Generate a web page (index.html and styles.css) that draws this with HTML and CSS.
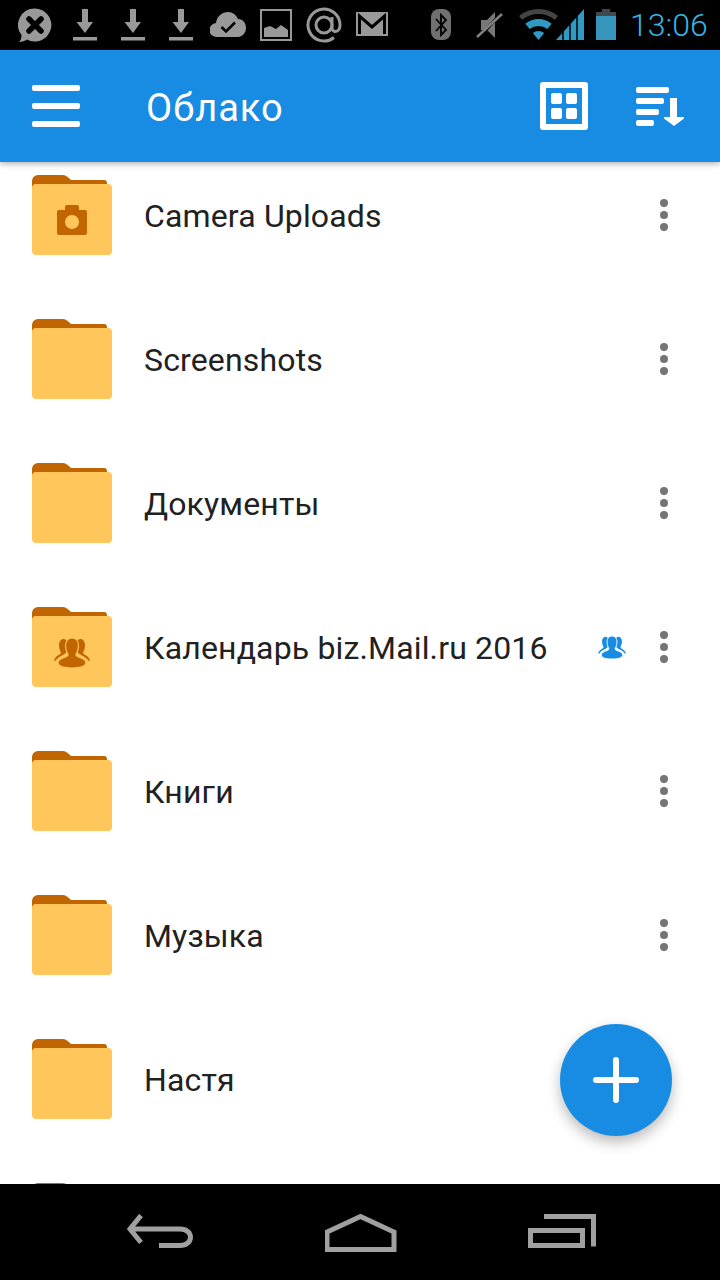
FILE: index.html
```html
<!DOCTYPE html>
<html lang="ru">
<head>
  <meta charset="UTF-8" />
  <meta name="viewport" content="width=device-width, initial-scale=1" />
  <title>Облако</title>
  <link rel="stylesheet" href="styles.css">
</head>
<body>
  <!-- общие символы -->
  <svg class="defs" width="0" height="0">
    <symbol id="download" viewBox="0 0 24 50">
      <path d="M9.500 9h6v13h5L12.500 33 4 22h5.500z"/>
      <rect x="0.500" y="37" width="24" height="3.500"/>
    </symbol>
    <symbol id="folder" viewBox="0 0 80 80">
      <path class="folder-back" d="M0 6a6 6 0 0 1 6-6h24c4 0 6 2 9 5h33c2 0 3 1 3 3v12H0z"/>
      <rect class="folder-front" y="9" width="80" height="71" rx="4"/>
    </symbol>
    <symbol id="more" viewBox="0 0 8 32">
      <circle cx="4" cy="4" r="4"/>
      <circle cx="4" cy="16" r="4"/>
      <circle cx="4" cy="28" r="4"/>
    </symbol>
    <symbol id="group" viewBox="0 0 36 30">
      <path d="M9 1c3 0 5 2 5 6 0 3-1 6-2 8-2 2-6 3-8 5l-3 3c-1 0-1-1-1-1l2-3c2-2 5-3 5-4-1-2-2-5-2-8s2-6 4-6z"/>
      <path d="M27 1c-3 0-5 2-5 6 0 3 1 6 2 8 2 2 6 3 8 5l3 3c1 0 1-1 1-1l-2-3c-2-2-5-3-5-4 1-2 2-5 2-8s-2-6-4-6z"/>
      <path class="group-main" d="M18 0c3.800 0 6.500 3 6.500 8 0 4-2 7-2.500 9 0 2 8 3 9.500 6 1.500 3.500-1 7-13.500 7S3 26.500 4.500 23c1.500-3 9.500-4 9.500-6-.5-2-2.500-5-2.500-9 0-5 2.700-8 6.500-8z"/>
    </symbol>
  </svg>

  <div class="status-bar">
    <svg class="st" width="36" height="50" viewBox="0 0 36 50">
      <path d="M17 8.500a16.500 16.500 0 1 1-8 31c-2 1.500-5 2.500-8 2.500 2-2 2.500-4 2.500-7A16.500 16.500 0 0 1 17 8.500z"/>
      <path class="st-cut" d="M11 19l12 12M23 19L11 31"/>
    </svg>
    <svg class="st st-dl st-dl-first"><use href="#download"/></svg>
    <svg class="st st-dl"><use href="#download"/></svg>
    <svg class="st st-dl"><use href="#download"/></svg>
    <svg class="st st-cloud" width="36" height="50" viewBox="0 0 36 50">
      <path d="M7 37a7 7 0 0 1-1-14c1-7 6-11 12-11 5 0 8 3 10 7 5 0 8 4 8 9 0 5-4 9-8 9z"/>
      <path class="st-check" d="M11.500 27l4.500 4.500 9-9"/>
    </svg>
    <svg class="st st-pic" width="32" height="50" viewBox="0 0 32 50">
      <rect class="st-line" x="1" y="10" width="30" height="30"/>
      <path d="M4 37v-9l6-2 6 3 5-4 7 5v7z"/>
    </svg>
    <svg class="st st-at" width="36" height="50" viewBox="0 0 36 50">
      <circle class="st-line3" cx="18" cy="25" r="8"/>
      <path class="st-line3" d="M26 17v11c0 5 8 5 8-3a16 16 0 1 0-6 12.500"/>
    </svg>
    <svg class="st st-mail" width="32" height="50" viewBox="0 0 32 50">
      <rect y="12" width="32" height="24"/>
      <path class="st-m" d="M3.500 34V16l12.500 11 12.500-11v18"/>
    </svg>

    <svg class="st st-bt" width="20" height="50" viewBox="0 0 20 50">
      <rect y="9" width="20" height="31" rx="8"/>
      <path class="st-rune" d="M5 19l10 11-5 5V15l5 5-10 11"/>
    </svg>
    <svg class="st st-mute" width="28" height="50" viewBox="0 0 28 50">
      <path d="M5 20h6l8-8v26l-8-8H5z"/>
      <path class="st-slash-cut" d="M1 40L27 11"/>
      <path class="st-slash" d="M1 37L26 14"/>
    </svg>
    <svg class="st st-wifi" width="39" height="50" viewBox="0 0 39 50">
      <path class="wifi-off" d="M0 15.900A31 31 0 0 1 39 15.900L35.900 19.800A26 26 0 0 0 3.100 19.800Z"/>
      <path d="M6.300 23.700A21 21 0 0 1 32.700 23.700L28.300 29.100A14 14 0 0 0 10.700 29.100Z"/>
      <path d="M13.800 33A9 9 0 0 1 25.200 33L19.500 40Z"/>
    </svg>
    <svg class="st st-signal" width="28" height="50" viewBox="0 0 28 50">
      <path d="M0 40L28 9v31z"/>
      <path class="signal-gap" d="M7 9v31M14 9v31M21 9v31"/>
    </svg>
    <svg class="st st-batt" width="20" height="50" viewBox="0 0 20 50">
      <path class="batt-top" d="M6 9h8v3h6v4H0v-4h6z"/>
      <rect y="16" width="20" height="24"/>
    </svg>
    <span class="time">13:06</span>
  </div>

  <header class="app-bar">
    <div class="burger"><span></span><span></span><span></span></div>
    <h1 class="title">Облако</h1>
    <div class="bar-actions">
      <svg class="bar-icon" width="48" height="48" viewBox="0 0 48 48">
        <path fill-rule="evenodd" d="M3 0h42a3 3 0 0 1 3 3v42a3 3 0 0 1-3 3H3a3 3 0 0 1-3-3V3a3 3 0 0 1 3-3zm3 6v36h36V6z"/>
        <rect x="11" y="11" width="11" height="11" rx="2"/>
        <rect x="26" y="11" width="11" height="11" rx="2"/>
        <rect x="11" y="26" width="11" height="11" rx="2"/>
        <rect x="26" y="26" width="11" height="11" rx="2"/>
      </svg>
      <svg class="bar-icon" width="48" height="48" viewBox="0 -5 48 48">
        <rect y="0" width="33" height="6" rx="2"/>
        <rect y="11" width="28" height="6" rx="2"/>
        <rect y="22" width="23" height="6" rx="2"/>
        <rect y="33" width="18" height="6" rx="2"/>
        <path d="M34 11h7v19h6a1 1 0 0 1 1 1.500L38 39 28 31.500a1 1 0 0 1 1-1.500h5z"/>
      </svg>
    </div>
  </header>

  <main class="content">
    <ul class="list">
      <li class="row">
        <span class="folder">
          <svg width="80" height="80"><use href="#folder"/></svg>
          <svg class="folder-mark camera" width="30" height="30" viewBox="0 0 30 30">
            <path d="M8 5V2a2 2 0 0 1 2-2h10a2 2 0 0 1 2 2v3h6a2 2 0 0 1 2 2v21a2 2 0 0 1-2 2H2a2 2 0 0 1-2-2V7a2 2 0 0 1 2-2z"/>
            <circle class="camera-lens" cx="15" cy="17" r="7"/>
          </svg>
        </span>
        <span class="name">Camera Uploads</span>
        <svg class="more" width="8" height="32"><use href="#more"/></svg>
      </li>
      <li class="row">
        <span class="folder"><svg width="80" height="80"><use href="#folder"/></svg></span>
        <span class="name">Screenshots</span>
        <svg class="more" width="8" height="32"><use href="#more"/></svg>
      </li>
      <li class="row">
        <span class="folder"><svg width="80" height="80"><use href="#folder"/></svg></span>
        <span class="name">Документы</span>
        <svg class="more" width="8" height="32"><use href="#more"/></svg>
      </li>
      <li class="row">
        <span class="folder">
          <svg width="80" height="80"><use href="#folder"/></svg>
          <svg class="folder-mark people" width="36" height="30"><use href="#group"/></svg>
        </span>
        <span class="name">Календарь biz.Mail.ru 2016</span>
        <svg class="shared" width="28" height="23"><use href="#group"/></svg>
        <svg class="more" width="8" height="32"><use href="#more"/></svg>
      </li>
      <li class="row">
        <span class="folder"><svg width="80" height="80"><use href="#folder"/></svg></span>
        <span class="name">Книги</span>
        <svg class="more" width="8" height="32"><use href="#more"/></svg>
      </li>
      <li class="row">
        <span class="folder"><svg width="80" height="80"><use href="#folder"/></svg></span>
        <span class="name">Музыка</span>
        <svg class="more" width="8" height="32"><use href="#more"/></svg>
      </li>
      <li class="row">
        <span class="folder"><svg width="80" height="80"><use href="#folder"/></svg></span>
        <span class="name">Настя</span>
      </li>
      <li class="row">
        <span class="folder"><svg width="80" height="80"><use href="#folder"/></svg></span>
      </li>
    </ul>
    <button class="fab" aria-label="Добавить">
      <svg width="46" height="46" viewBox="0 0 46 46"><path d="M23 3v40M3 23h40"/></svg>
    </button>
  </main>

  <nav class="nav-bar">
    <svg class="nav-icon" width="66" height="34" viewBox="0 0 66 34">
      <path d="M14 1.500L3 15l11 13.500M3 15h50c14 0 14 16.500 0 16.500H32"/>
    </svg>
    <svg class="nav-icon" width="72" height="38" viewBox="0.500 0 72 38">
      <path d="M36 2.500L2.500 18v17.500h67V18z"/>
    </svg>
    <svg class="nav-icon" width="68" height="34" viewBox="0 0 68 34">
      <path d="M2.500 16.500h52v15h-52zM16 2.500h49.500v30" class="recent"/>
    </svg>
  </nav>
</body>
</html>
```

FILE: styles.css
```css
* {
  box-sizing: border-box;
}

html, body {
  margin: 0;
  padding: 0;
  height: 100%;
}

body {
  display: flex;
  flex-direction: column;
  height: 1280px;
  font-family: Roboto, "Noto Sans", sans-serif;
  background: #ffffff;
  overflow: hidden;
}

.defs {
  position: absolute;
}

/* Статус-бар */
.status-bar {
  display: flex;
  align-items: center;
  flex: none;
  height: 50px;
  padding-left: 18px;
  background: #000000;
}

.st {
  display: block;
  flex: none;
  width: auto;
  height: 50px;
  fill: #999999;
}

.st-cut {
  fill: none;
  stroke: #000000;
  stroke-width: 5.5;
  stroke-linecap: round;
}

.st-dl {
  width: 25px;
  margin-left: 23px;
}

.st-dl-first {
  margin-left: 18px;
}

.st-cloud {
  margin-left: 17px;
}

.st-check {
  fill: none;
  stroke: #000000;
  stroke-width: 2.5;
}

.st-pic {
  margin-left: 14px;
}

.st-line {
  fill: none;
  stroke: #999999;
  stroke-width: 2;
}

.st-at {
  margin-left: 14px;
}

.st-line3 {
  fill: none;
  stroke: #999999;
  stroke-width: 3;
}

.st-mail {
  margin-left: 14px;
}

.st-m {
  fill: none;
  stroke: #000000;
  stroke-width: 3;
}

.st-bt {
  margin-left: 43px;
  fill: #707070;
}

.st-rune {
  fill: none;
  stroke: #000000;
  stroke-width: 1.800;
}

.st-mute {
  margin-left: 25px;
  fill: #777777;
}

.st-slash-cut {
  fill: none;
  stroke: #000000;
  stroke-width: 3;
}

.st-slash {
  fill: none;
  stroke: #808080;
  stroke-width: 2.500;
}

.st-wifi {
  margin-left: 15px;
  fill: #2f9ac4;
}

.wifi-off {
  fill: #444444;
}

.st-signal {
  margin-left: -2px;
  fill: #2f9ac4;
}

.signal-gap {
  fill: none;
  stroke: #000000;
  stroke-width: 1.500;
}

.st-batt {
  margin-left: 12px;
  fill: #3595bc;
}

.batt-top {
  fill: #3f4a4f;
}

.time {
  margin-left: 14px;
  font-size: 32px;
  font-weight: 300;
  color: #33b5e5;
}

/* Верхняя панель */
.app-bar {
  position: relative;
  z-index: 2;
  display: flex;
  align-items: center;
  flex: none;
  height: 112px;
  padding: 0 36px 0 32px;
  background: #188ce2;
  box-shadow: 0 2px 6px rgba(0, 0, 0, 0.3);
}

.burger {
  display: flex;
  flex-direction: column;
  gap: 12px;
  width: 48px;
}

.burger span {
  display: block;
  height: 6px;
  border-radius: 2px;
  background: #ffffff;
}

.title {
  flex: 1;
  margin: 3px 0 0 66px;
  font-size: 38px;
  font-weight: 400;
  letter-spacing: 1px;
  color: #ffffff;
}

.bar-actions {
  display: flex;
  gap: 48px;
}

.bar-icon {
  fill: #ffffff;
}

/* Список папок */
.content {
  position: relative;
  flex: 1;
  min-height: 0;
  overflow: hidden;
}

.list {
  margin: -19px 0 0;
  padding: 0;
  list-style: none;
}

.row {
  display: flex;
  align-items: center;
  height: 144px;
  padding: 0 52px 0 32px;
}

.folder {
  position: relative;
  flex: none;
  width: 80px;
  height: 80px;
  margin-right: 32px;
}

.folder svg {
  display: block;
}

.folder-back {
  fill: #c06500;
}

.folder-front {
  fill: #ffc65c;
}

.folder-mark {
  position: absolute;
  left: 25px;
  top: 30px;
  fill: #c06500;
}

.people {
  left: 22px;
  top: 31px;
  --group-gap: #ffc65c;
}

.camera-lens {
  fill: #ffc65c;
}

.group-main {
  stroke: var(--group-gap, #ffffff);
  stroke-width: 1.2;
}

.name {
  flex: 1;
  margin-top: 1px;
  font-size: 32px;
  letter-spacing: 0.15px;
  color: #212121;
  white-space: nowrap;
}

.shared {
  flex: none;
  margin-right: 34px;
  fill: #188ce2;
}

.more {
  flex: none;
  fill: #757575;
}

.fab {
  position: absolute;
  left: 560px;
  top: 862px;
  display: flex;
  align-items: center;
  justify-content: center;
  width: 112px;
  height: 112px;
  padding: 0;
  border: none;
  border-radius: 50%;
  background: #188ce2;
  box-shadow: 0 6px 14px rgba(0, 0, 0, 0.28);
}

.fab path {
  fill: none;
  stroke: #ffffff;
  stroke-width: 6;
  stroke-linecap: round;
}

/* Навигация */
.nav-bar {
  position: relative;
  z-index: 2;
  display: flex;
  align-items: flex-start;
  flex: none;
  height: 96px;
  padding: 30px 124px 0 127px;
  justify-content: space-between;
  background: #000000;
}

.nav-icon path {
  fill: none;
  stroke: #a0a0a0;
  stroke-width: 5;
}
```
